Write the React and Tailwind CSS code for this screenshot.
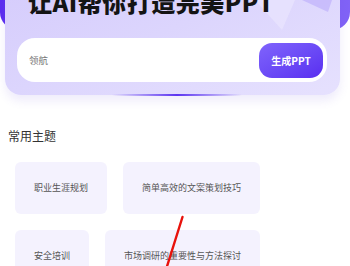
import React from 'react';

const topics = [
  '职业生涯规划',
  '简单高效的文案策划技巧',
  '安全培训',
  '市场调研的重要性与方法探讨',
];

export default function App() {
  return (
    <div className="relative w-[350px] h-[266px] overflow-hidden bg-white font-['Noto_Sans_CJK_SC','Noto_Sans',sans-serif]">
      {/* header */}
      <div className="relative">
        <div className="absolute left-0 right-0 top-0 h-[70px] rounded-b-[18px] bg-gradient-to-r from-[#5a2bef] via-[#6b45f3] to-[#8163f6]" />
        <div className="relative ml-[5px] mr-[10px] -mt-[40px] pt-[28px] pb-[13px] rounded-[16px] overflow-hidden bg-gradient-to-br from-[#d4cafc] via-[#dcd5fd] to-[#e6e1fe] shadow-[0_6px_10px_rgba(120,100,220,0.12)]">
          <svg className="absolute right-0 top-[40px] w-[100px] h-[50px]" viewBox="0 0 100 50">
            <polygon points="15,0 55,0 42,30" fill="#e9e5fe" opacity="0.7" />
            <polygon points="62,0 92,0 88,12" fill="#c3b6fb" opacity="0.8" />
          </svg>
          <h1 className="relative pl-[23px] text-[24px] leading-[28px] font-black text-[#141414] tracking-[0.5px]">
            让AI帮你打造完美PPT
          </h1>
          <div className="relative mt-[22px] ml-[12px] mr-[13px] h-[44px] rounded-[18px] bg-white flex items-center justify-between pl-[12px] pr-[4px]">
            <span className="text-[9.5px] text-[#777]">领航</span>
            <button className="w-[64px] h-[35px] rounded-[13px] bg-gradient-to-br from-[#8063fc] to-[#5a2cf0] text-white text-[10px] font-bold">
              生成PPT
            </button>
          </div>
        </div>
        <div className="ml-[112px] -mt-[1px] w-[130px] h-[2px] rounded-b-full bg-gradient-to-r from-transparent via-[#5b34f0] to-transparent blur-[0.5px]" />
      </div>

      {/* topics */}
      <div className="mt-[32px] pl-[8px]">
        <h2 className="text-[12px] leading-[16px] text-[#333]">常用主题</h2>
        <div className="mt-[18px] ml-[7px] w-[250px] flex flex-wrap gap-x-[16px] gap-y-[16px]">
          {topics.map((t) => (
            <div
              key={t}
              className="h-[52px] px-[19px] rounded-[6px] bg-[#f4f2fe] flex items-center justify-center text-[9px] text-[#555] whitespace-nowrap"
            >
              {t}
            </div>
          ))}
        </div>
      </div>

      {/* annotation stroke */}
      <svg className="absolute left-0 top-0 w-[350px] h-[266px] pointer-events-none" viewBox="0 0 350 266">
        <line x1="182.5" y1="217" x2="166.5" y2="268" stroke="#e8120c" strokeWidth="2.4" strokeLinecap="round" />
      </svg>
    </div>
  );
}
